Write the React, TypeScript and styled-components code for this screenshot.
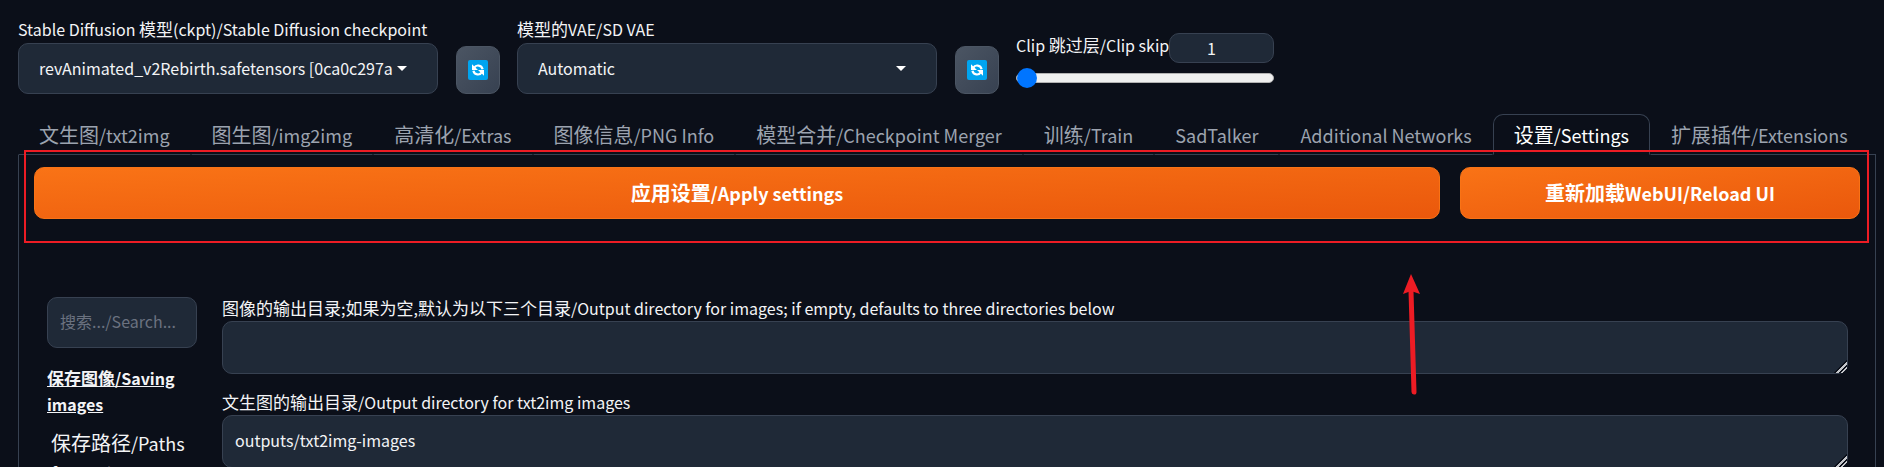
import React from "react";
import styled, { createGlobalStyle } from "styled-components";

const colors = {
  page: "#0b0f19",
  field: "#1f2937",
  line: "#374151",
  text: "#f3f4f6",
  muted: "#9ca3af",
  faint: "#6b7280",
  mark: "#ed1c24",
};

const GlobalStyle = createGlobalStyle`
  *, *::before, *::after { box-sizing: border-box; }
  html { background: ${colors.page}; }
  body { margin: 0; height: 100vh; overflow: hidden; }
  body, button, input, select, textarea {
    font-family: "Noto Sans CJK SC", "Noto Sans", sans-serif;
    color: ${colors.text};
  }
`;

const Page = styled.main`
  padding: 16px 8px 0 18px;
  background: ${colors.page};
`;

/* Han characters are set slightly larger than the Latin text beside them. */
const hanSizes = { 16: 17, 18: 20 } as const;

const Han = styled.span<{ $size: number }>`
  font-size: ${(p) => p.$size}px;
  line-height: 1;
`;

function Bilingual({ text, size }: { text: string; size: 16 | 18 }) {
  return (
    <>
      {text.split(/([\u4e00-\u9fff]+)/).map((run, i) =>
        i % 2 ? (
          <Han key={i} $size={hanSizes[size]}>
            {run}
          </Han>
        ) : (
          run
        )
      )}
    </>
  );
}

const QuickSettings = styled.section`
  display: flex;
  align-items: flex-end;
  gap: 17px;
`;

const Picker = styled.div`
  width: 420px;
`;

const Label = styled.label`
  display: block;
  height: 27px;
  font-size: 16px;
  line-height: 26px;
  white-space: nowrap;
`;

const SelectBox = styled.div`
  display: grid;
  align-items: center;
`;

const Select = styled.select`
  grid-area: 1 / 1;
  width: 100%;
  height: 51px;
  padding: 0 40px 2px 20px;
  appearance: none;
  border: 1px solid ${colors.line};
  border-radius: 10px;
  background: ${colors.field};
  font-size: 16px;
`;

const Caret = styled.svg`
  grid-area: 1 / 1;
  justify-self: end;
  margin-right: 31px;
  pointer-events: none;
`;

const RefreshButton = styled.button`
  display: flex;
  align-items: center;
  justify-content: center;
  width: 44px;
  height: 48px;
  margin-left: 1px;
  padding: 0;
  border: 1px solid #4b5563;
  border-radius: 10px;
  background: linear-gradient(to bottom right, #4b5563, #374151);
`;

const ClipSkip = styled.div`
  width: 258px;
  height: 61px;
`;

const ClipHead = styled.div`
  display: flex;
  justify-content: space-between;
  height: 30px;
`;

const ClipLabel = styled.label`
  flex: 1;
  min-width: 0;
  font-size: 16px;
  line-height: 24px;
  white-space: nowrap;
`;

const NumberBox = styled.input`
  flex: none;
  width: 105px;
  height: 30px;
  padding: 0 20px 0 0;
  border: 1px solid ${colors.line};
  border-radius: 10px;
  background: ${colors.field};
  font-size: 16px;
  text-align: center;
`;

const Slider = styled.input`
  display: block;
  width: 100%;
  height: 20px;
  margin: 5px 0 0;
  appearance: none;
  background: transparent;
  &::-webkit-slider-runnable-track {
    height: 10px;
    border: 1px solid #b2b2b2;
    border-radius: 5px;
    background: #efefef;
  }
  &::-webkit-slider-thumb {
    appearance: none;
    width: 20px;
    height: 20px;
    margin-top: -6px;
    border-radius: 50%;
    background: #0075ff;
  }
`;

const TabList = styled.nav`
  display: flex;
  margin-top: 20px;
`;

const Tab = styled.button<{ $active: boolean }>`
  height: 41px;
  padding: 0 20px;
  border: 1px solid ${(p) => (p.$active ? colors.line : "transparent")};
  border-bottom-color: ${(p) => (p.$active ? colors.page : colors.line)};
  border-radius: ${(p) => (p.$active ? "10px 10px 0 0" : "0")};
  background: transparent;
  color: ${(p) => (p.$active ? "#ffffff" : colors.muted)};
  font-size: 18px;
  line-height: 38px;
  white-space: nowrap;
`;

const TabRule = styled.div`
  flex: 1;
  border-bottom: 1px solid ${colors.line};
`;

const Panel = styled.section`
  position: relative;
  padding: 12px 15px 0;
  border: 1px solid ${colors.line};
  border-top: 0;
`;

const Actions = styled.div`
  display: flex;
  gap: 20px;
`;

const PrimaryButton = styled.button<{ $grow: number }>`
  flex: ${(p) => p.$grow} 1 0;
  height: 52px;
  padding: 0;
  border: 1px solid #f97316;
  border-radius: 10px;
  background: linear-gradient(to bottom right, #f97316, #ea580c);
  color: #ffffff;
  font-size: 18px;
  font-weight: 700;
`;

const Highlight = styled.div`
  position: absolute;
  top: -5px;
  left: 5px;
  right: 6px;
  height: 93px;
  border: 2px solid ${colors.mark};
  pointer-events: none;
`;

const Arrow = styled.svg`
  position: absolute;
  top: 119px;
  right: 453px;
  pointer-events: none;
`;

const Body = styled.div`
  display: flex;
  gap: 25px;
  padding: 78px 12px 0 13px;
`;

const Sidebar = styled.aside`
  width: 150px;
  flex: none;
`;

const Search = styled.input`
  width: 100%;
  height: 51px;
  padding: 0 12px 3px;
  border: 1px solid ${colors.line};
  border-radius: 10px;
  background: ${colors.field};
  font-size: 16px;
  &::placeholder { color: ${colors.faint}; opacity: 1; }
`;

const GroupTitle = styled.h2`
  margin: 17px 0 0;
  font-size: 16px;
  font-weight: 700;
  line-height: 26px;
  text-decoration: underline;
`;

const SideLink = styled.a`
  display: block;
  padding: 11px 4px;
  color: ${colors.text};
  font-size: 18px;
  line-height: 30px;
  text-decoration: none;
`;

const Fields = styled.div`
  flex: 1;
  display: flex;
  flex-direction: column;
  gap: 17px;
`;

const TextBox = styled.textarea`
  display: block;
  width: 100%;
  height: 53px;
  padding: 11px 12px;
  border: 1px solid ${colors.line};
  border-radius: 10px;
  background: ${colors.field};
  font-size: 16px;
  line-height: 26px;
  overflow: hidden;
  resize: vertical;
  &::-webkit-resizer {
    background: linear-gradient(
      135deg,
      transparent 0 56%,
      ${colors.page} 56% 61%,
      #c4c6ca 61% 71%,
      ${colors.page} 71% 77%,
      #c4c6ca 77% 86%,
      transparent 86%
    );
  }
`;

const FieldLabel = styled(Label)`
  height: 24px;
  line-height: 22px;
`;

const RefreshIcon = () => (
  <svg width="20" height="20" viewBox="0 0 20 20" aria-hidden="true">
    <rect width="20" height="20" rx="2" fill="#00a4ef" />
    <path
      d="M6.500 7.500C8 4.600 13.500 4.600 14.600 9.200M13.500 12.500C12 15.400 6.500 15.400 5.400 10.800"
      fill="none"
      stroke="#fff"
      strokeWidth="2.200"
    />
    <path d="M4 4.200v5.800h6zM16 15.800v-5.800h-6z" fill="#fff" />
  </svg>
);

const DownCaret = () => (
  <Caret width="10" height="5" viewBox="0 0 10 5" aria-hidden="true">
    <path d="M0 0h10L5 5z" fill="#fff" />
  </Caret>
);

const pickers = [
  {
    id: "checkpoint",
    label: "Stable Diffusion 模型(ckpt)/Stable Diffusion checkpoint",
    value: "revAnimated_v2Rebirth.safetensors [0ca0c297a",
  },
  { id: "vae", label: "模型的VAE/SD VAE", value: "Automatic" },
];

const tabs = [
  "文生图/txt2img",
  "图生图/img2img",
  "高清化/Extras",
  "图像信息/PNG Info",
  "模型合并/Checkpoint Merger",
  "训练/Train",
  "SadTalker",
  "Additional Networks",
  "设置/Settings",
  "扩展插件/Extensions",
];

const fields = [
  {
    id: "outdir",
    label:
      "图像的输出目录;如果为空,默认为以下三个目录/Output directory for images; if empty, defaults to three directories below",
    value: "",
  },
  {
    id: "outdir-txt2img",
    label: "文生图的输出目录/Output directory for txt2img images",
    value: "outputs/txt2img-images",
  },
];

export default function App() {
  return (
    <Page>
      <GlobalStyle />
      <QuickSettings>
        {pickers.map((p) => (
          <React.Fragment key={p.id}>
            <Picker>
              <Label htmlFor={p.id}>
                <Bilingual text={p.label} size={16} />
              </Label>
              <SelectBox>
                <Select id={p.id}>
                  <option>{p.value}</option>
                </Select>
                <DownCaret />
              </SelectBox>
            </Picker>
            <RefreshButton type="button" aria-label="Refresh">
              <RefreshIcon />
            </RefreshButton>
          </React.Fragment>
        ))}
        <ClipSkip>
          <ClipHead>
            <ClipLabel htmlFor="clip">
              <Bilingual text="Clip 跳过层/Clip skip" size={16} />
            </ClipLabel>
            <NumberBox id="clip" defaultValue="1" />
          </ClipHead>
          <Slider type="range" min={1} max={12} defaultValue={1} aria-label="Clip skip" />
        </ClipSkip>
      </QuickSettings>

      <TabList>
        {tabs.map((t) => (
          <Tab key={t} type="button" $active={t === "设置/Settings"}>
            <Bilingual text={t} size={18} />
          </Tab>
        ))}
        <TabRule />
      </TabList>

      <Panel>
        <Actions>
          <PrimaryButton type="button" $grow={702}>
            <Bilingual text="应用设置/Apply settings" size={18} />
          </PrimaryButton>
          <PrimaryButton type="button" $grow={199}>
            <Bilingual text="重新加载WebUI/Reload UI" size={18} />
          </PrimaryButton>
        </Actions>
        <Body>
          <Sidebar>
            <Search placeholder="搜索.../Search..." aria-label="Search" />
            <GroupTitle>
              <Bilingual text="保存图像/Saving images" size={16} />
            </GroupTitle>
            <SideLink href="#paths">
              <Bilingual text="保存路径/Paths for saving" size={18} />
            </SideLink>
          </Sidebar>
          <Fields>
            {fields.map((f) => (
              <div key={f.id}>
                <FieldLabel htmlFor={f.id}>
                  <Bilingual text={f.label} size={16} />
                </FieldLabel>
                <TextBox id={f.id} rows={1} defaultValue={f.value} />
              </div>
            ))}
          </Fields>
        </Body>
        <Highlight />
        <Arrow width="20" height="122" viewBox="0 0 20 122" aria-hidden="true">
          <path d="M9 17L12 118" stroke={colors.mark} strokeWidth="5" strokeLinecap="round" />
          <path d="M9 0L18 20L9 17L1 20z" fill={colors.mark} />
        </Arrow>
      </Panel>
    </Page>
  );
}
